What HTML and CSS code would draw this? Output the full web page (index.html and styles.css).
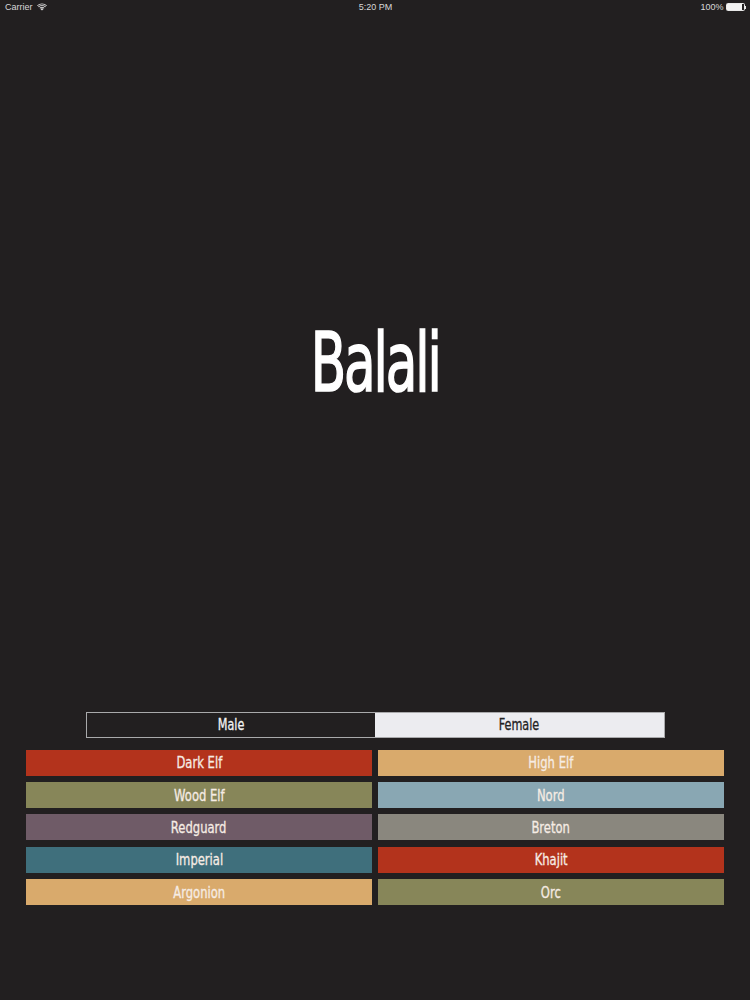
FILE: index.html
```html
<!DOCTYPE html>
<html>
<head>
<meta charset="utf-8">
<link rel="stylesheet" href="styles.css">
</head>
<body>
<div class="screen">
  <div class="status-bar">
    <div class="sb-left">
      <span>Carrier</span>
      <svg class="wifi" width="10" height="8" viewBox="0 0 10 8">
        <path d="M5 7.6 L3.4 5.9 A2.3 2.3 0 0 1 6.6 5.9 Z" fill="#ddd"/>
        <path d="M2.5 5 A3.6 3.6 0 0 1 7.5 5 L6.9 5.6 A2.8 2.8 0 0 0 3.1 5.6 Z" fill="#ddd"/>
        <path d="M1.1 3.6 A5.6 5.6 0 0 1 8.9 3.6 L8.3 4.2 A4.8 4.8 0 0 0 1.7 4.2 Z" fill="#ddd"/>
        <path d="M0 2.4 A7.2 7.2 0 0 1 10 2.4 L9.4 3 A6.4 6.4 0 0 0 0.6 3 Z" fill="#ddd"/>
      </svg>
    </div>
    <div class="sb-center">5:20 PM</div>
    <div class="sb-right">
      <span>100%</span>
      <span class="battery"><span class="battery-fill"></span></span><span class="battery-tip"></span>
    </div>
  </div>

  <div class="title-area">
    <h1 class="title">Balali</h1>
  </div>

  <div class="controls">
    <div class="segmented">
      <div class="segment"><span class="label">Male</span></div>
      <div class="segment selected"><span class="label">Female</span></div>
    </div>
    <div class="races">
      <div class="race c-red"><span class="label">Dark Elf</span></div>
      <div class="race c-sand"><span class="label">High Elf</span></div>
      <div class="race c-olive"><span class="label">Wood Elf</span></div>
      <div class="race c-sky"><span class="label">Nord</span></div>
      <div class="race c-mauve"><span class="label">Redguard</span></div>
      <div class="race c-grey"><span class="label">Breton</span></div>
      <div class="race c-teal"><span class="label">Imperial</span></div>
      <div class="race c-red"><span class="label">Khajit</span></div>
      <div class="race c-sand"><span class="label">Argonion</span></div>
      <div class="race c-olive"><span class="label">Orc</span></div>
    </div>
  </div>
</div>
</body>
</html>
```

FILE: styles.css
```css
html, body {
  margin: 0;
  padding: 0;
  background: #221f20;
}

.screen {
  width: 750px;
  height: 1000px;
  display: flex;
  flex-direction: column;
  background: #221f20;
  color: #fff;
  font-family: "DejaVu Sans Condensed", "DejaVu Sans", sans-serif;
  font-stretch: condensed;
}

.status-bar {
  height: 14px;
  display: flex;
  align-items: center;
  justify-content: space-between;
  padding: 0 4px 0 5px;
  font-family: "Liberation Sans", sans-serif;
  font-stretch: normal;
  font-size: 9px;
  color: #d8d8d8;
}

.sb-left, .sb-right {
  display: flex;
  align-items: center;
  width: 120px;
}

.sb-left span { margin-right: 4px; }

.sb-right { justify-content: flex-end; }

.sb-right span:first-child { margin-right: 2px; }

.sb-center { text-align: center; }

.battery {
  width: 17px;
  height: 6px;
  border: 1px solid #e8e8e8;
  border-radius: 1.5px;
  display: flex;
  box-sizing: content-box;
}

.battery-fill {
  flex: 1;
  background: #f2f2f2;
}

.battery-tip {
  width: 1.5px;
  height: 3px;
  background: #e8e8e8;
}

.title-area {
  flex: 1;
  display: flex;
  align-items: center;
  justify-content: center;
}

.title {
  margin: 0;
  font-size: 82px;
  font-weight: normal;
  line-height: 1;
  letter-spacing: -3px;
  color: #ffffff;
  -webkit-text-stroke: 1.6px #ffffff;
  transform: scaleX(0.7);
}

.controls {
  display: flex;
  flex-direction: column;
  align-items: center;
  padding-bottom: 95px;
}

.segmented {
  width: 579px;
  height: 26px;
  display: flex;
  border: 1px solid #a9a9ab;
  box-sizing: border-box;
  margin-bottom: 12px;
}

.segment {
  flex: 1;
  display: flex;
  align-items: center;
  justify-content: center;
  font-size: 16px;
  color: #f2f2f2;
}

.segment.selected {
  background: #ececf0;
  color: #222;
}

.label {
  display: inline-block;
  transform: scaleX(0.78);
  -webkit-text-stroke: 0.3px currentColor;
}

.races {
  width: 698px;
  display: grid;
  grid-template-columns: 1fr 1fr;
  grid-auto-rows: 26px;
  column-gap: 6px;
  row-gap: 6.3px;
}

.race {
  display: flex;
  align-items: center;
  justify-content: center;
  font-size: 16.5px;
  color: #f6ece4;
}

.c-red { background: #b3331c; }
.c-sand { background: #d9aa6c; }
.c-olive { background: #878659; }
.c-sky { background: #89a7b3; }
.c-mauve { background: #6f5b67; }
.c-grey { background: #8a877e; }
.c-teal { background: #3f6f7c; }
```
